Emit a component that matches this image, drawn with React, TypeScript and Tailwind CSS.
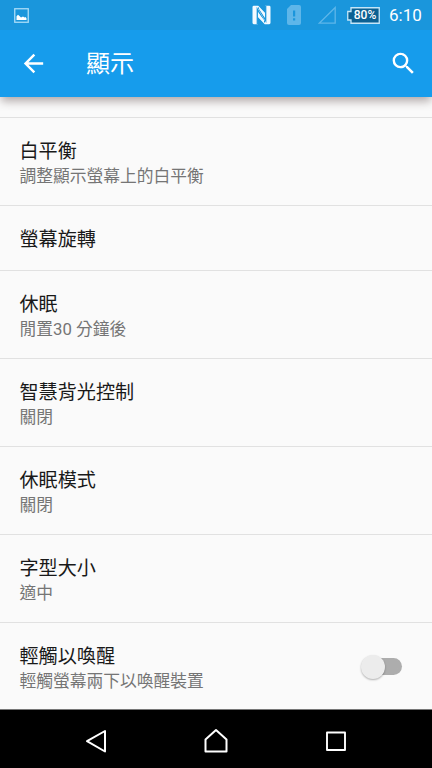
import React from "react";

type Setting = { title: string; summary?: string; toggle?: boolean };

const settings: Setting[] = [
  { title: "白平衡", summary: "調整顯示螢幕上的白平衡" },
  { title: "螢幕旋轉" },
  { title: "休眠", summary: "閒置30 分鐘後" },
  { title: "智慧背光控制", summary: "關閉" },
  { title: "休眠模式", summary: "關閉" },
  { title: "字型大小", summary: "適中" },
  { title: "輕觸以喚醒", summary: "輕觸螢幕兩下以喚醒裝置", toggle: true },
];

function StatusBar() {
  return (
    <div className="flex h-[30px] shrink-0 items-center bg-[#1a96dc] pr-[10px] pl-[14px] text-white">
      <svg width="15" height="15" viewBox="0 0 15 15" className="mt-px">
        <rect x="0.75" y="0.75" width="13.5" height="13.5" fill="none" stroke="#a9dcf8" strokeWidth="1.3" />
        <path d="M2.5 12V8.3L4 6.800l1.500 1.200 1.500 1.500L9 8.500l1.500 1 1-.5 1 1.200V12z" fill="#fff" />
      </svg>
      <div className="flex-1" />
      <svg width="19" height="20" viewBox="0 0 19 20">
        <path d="M1.800.8h4.500L13 8V.8h4.200q1.300 0 1.300 1.400v15.600q0 1.400-1.300 1.400h-4.500L6 12v7.200H1.800Q.5 19.200.5 17.800V2.200Q.5.800 1.800.8z" fill="#f3faff" />
        <path d="M5.300 19.200V4.200L13 17.300" fill="none" stroke="#1a96dc" strokeWidth="1.300" />
        <path d="M13.700.8V15.500L6.200 2.500" fill="none" stroke="#1a96dc" strokeWidth="1.300" />
        <path d="M6.500 8v4.500l5.500 5V15zM12.500 12V7.500L7 2.500V4z" fill="#f3faff" />
      </svg>
      <svg width="14" height="20" viewBox="0 0 14 20" className="ml-[16px]">
        <path d="M4 0h8q2 0 2 2v16q0 2-2 2H2q-2 0-2-2V4z" fill="#5eb6e9" />
        <path d="M6 5.500h2.200v6H6zM6 13.300h2.200v2.200H6z" fill="#1a96dc" />
      </svg>
      <svg width="18" height="18" viewBox="0 0 18 18" className="ml-[17px]">
        <path d="M17.200 1.500v15.700H1.200z" fill="none" stroke="#5eb6e9" strokeWidth="1.300" />
      </svg>
      <div className="relative ml-[11px] h-[17px] w-[33px]">
        <svg width="33" height="17" viewBox="0 0 33 17" className="absolute inset-0">
          <path d="M4 .75h28.250v15.500H4V13H.75V4.500H4z" fill="#0c6192" stroke="#c4e6f8" strokeWidth="1.300" />
        </svg>
        <span className="absolute inset-0 pl-[3px] text-center font-['Roboto'] text-[12px] leading-[17px] font-medium">80%</span>
      </div>
      <span className="ml-[9px] w-[33px] font-['Roboto'] text-[17px] leading-[32px] whitespace-nowrap">6:10</span>
    </div>
  );
}

function AppBar() {
  return (
    <header className="flex h-[67px] shrink-0 items-center bg-[#169cec] pr-[14px] pl-[19px] text-white">
      <svg width="29" height="29" viewBox="0 0 24 24" fill="currentColor">
        <path d="M20 11H7.830l5.590-5.590L12 4l-8 8 8 8 1.410-1.410L7.830 13H20v-2z" />
      </svg>
      <h1 className="ml-[38px] text-[24px] leading-[30px]">顯示</h1>
      <svg width="29" height="29" viewBox="0 0 24 24" fill="currentColor" className="ml-auto">
        <path d="M15.500 14h-.79l-.28-.27A6.470 6.470 0 0 0 16 9.500 6.500 6.500 0 1 0 9.500 16c1.610 0 3.090-.59 4.230-1.570l.27.28v.79l5 4.990L20.490 19l-4.990-5zm-6 0C7.010 14 5 11.990 5 9.500S7.010 5 9.500 5 14 7.010 14 9.500 11.990 14 9.500 14z" />
      </svg>
    </header>
  );
}

function Row({ item }: { item: Setting }) {
  return (
    <div className={`flex items-center border-t border-[#e1e1e1] pr-[30px] pl-[19.500px] ${item.summary ? "h-[88px]" : "h-[65px]"}`}>
      <div className={item.summary ? "flex-1 pt-[5px]" : "flex-1 pt-[2px]"}>
        <div className="text-[19.100px] leading-[25px] text-[#191919]">{item.title}</div>
        {item.summary && <div className="text-[16.750px] leading-[25px] text-[#757575]">{item.summary}</div>}
      </div>
      {item.toggle && (
        <div className="flex h-[17px] w-[41px] items-center rounded-full bg-linear-to-r from-transparent from-30% to-[#adadad] to-30%">
          <div className="size-[24px] shrink-0 rounded-full bg-[#ececec] shadow-[0_1px_2px_rgba(0,0,0,0.3)]" />
        </div>
      )}
    </div>
  );
}

function NavBar() {
  return (
    <nav className="flex h-[58px] shrink-0 items-center justify-center gap-[92px] bg-black pt-[4px]">
      <svg width="28" height="28" viewBox="0 0 28 28" fill="none" stroke="#fff" strokeWidth="2" strokeLinejoin="round">
        <path d="M23 4v20.500L5 14.200z" />
      </svg>
      <svg width="28" height="28" viewBox="0 0 28 28" fill="none" stroke="#fff" strokeWidth="2" strokeLinejoin="round">
        <path d="M3.500 24.500V12.500L14 3l10.500 9.500v12z" />
      </svg>
      <svg width="28" height="28" viewBox="0 0 28 28" fill="none" stroke="#fff" strokeWidth="1.900" strokeLinejoin="round">
        <path d="M5 5.500h18v17.500H5z" />
      </svg>
    </nav>
  );
}

export default function App() {
  return (
    <div className="flex h-[768px] w-[432px] flex-col overflow-hidden bg-[#fafafa] font-['Roboto','Noto_Sans_CJK_TC',sans-serif]">
      <StatusBar />
      <AppBar />
      <div className="h-[20px] shrink-0 overflow-hidden">
        <div className="mx-[3px] -mt-[10px] h-[10px] shadow-[0_2px_10px_2px_rgba(60,40,40,0.4)]" />
      </div>
      <main className="min-h-0 flex-1 overflow-hidden">
        {settings.map((item) => (
          <Row key={item.title} item={item} />
        ))}
      </main>
      <div className="h-px shrink-0 bg-[#777]" />
      <NavBar />
    </div>
  );
}
